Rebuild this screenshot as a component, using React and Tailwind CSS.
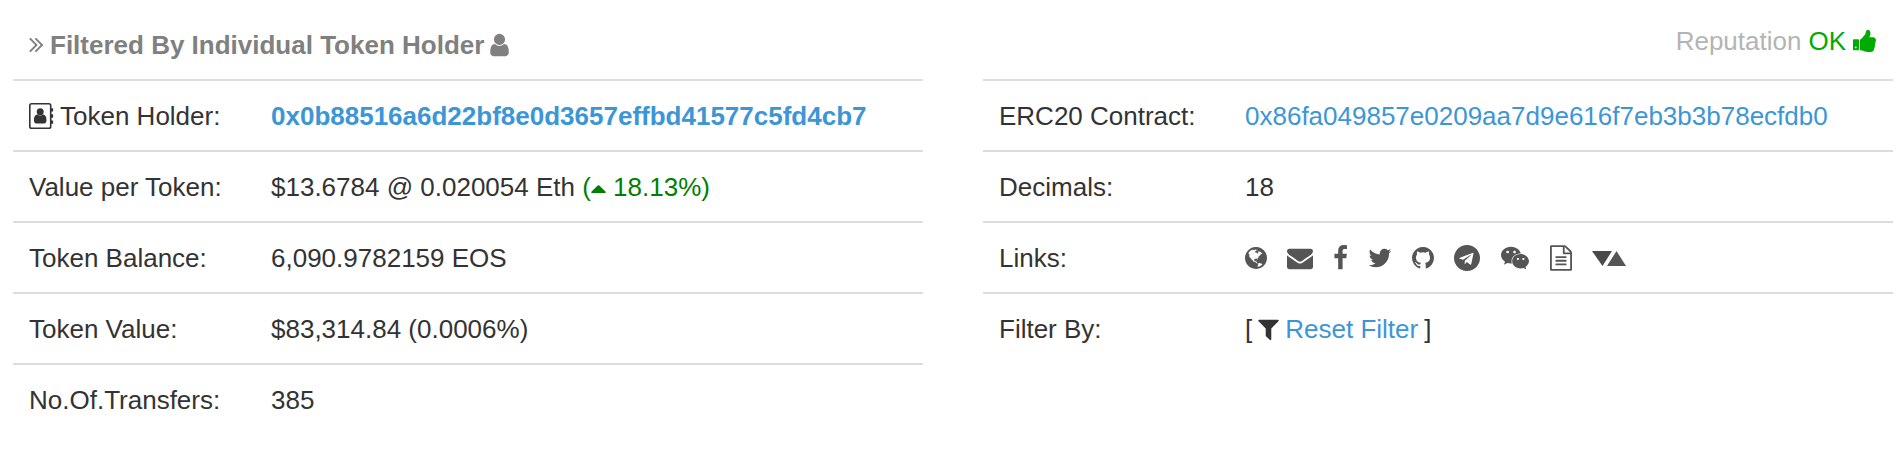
import { FaWeixin } from 'react-icons/fa';

const paths = {
  angles:
    'M979 960q0 13-10 23l-466 466q-10 10-23 10t-23-10l-50-50q-10-10-10-23t10-23l393-393-393-393q-10-10-10-23t10-23l50-50q10-10 23-10t23 10l466 466q10 10 10 23zm384 0q0 13-10 23l-466 466q-10 10-23 10t-23-10l-50-50q-10-10-10-23t10-23l393-393-393-393q-10-10-10-23t10-23l50-50q10-10 23-10t23 10l466 466q10 10 10 23z',
  user:
    'M1536 1399q0 109-62.5 187t-150.5 78h-854q-88 0-150.5-78t-62.5-187q0-85 8.5-160.5t31.5-152 58.5-131 94-89 134.5-34.5q131 128 313 128t313-128q76 0 134.5 34.5t94 89 58.5 131 31.5 152 8.5 160.5zm-256-887q0 159-112.5 271.5t-271.5 112.5-271.5-112.5-112.5-271.5 112.5-271.5 271.5-112.5 271.5 112.5 112.5 271.5z',
  thumb:
    'M320 1344q0-26-19-45t-45-19q-27 0-45.5 19t-18.5 45q0 27 18.5 45.5t45.5 18.5q26 0 45-18.5t19-45.5zm160-512v640q0 26-19 45t-45 19h-288q-26 0-45-19t-19-45v-640q0-26 19-45t45-19h288q26 0 45 19t19 45zm1184 0q0 86-55 149 15 44 15 76 3 76-43 137 17 56 0 117-15 57-54 94 9 112-49 181-64 76-197 78h-129q-66 0-144-15.5t-121.5-29-120.5-39.5q-123-43-158-44-26-1-45-19.5t-19-44.5v-641q0-25 18-43.5t43-20.5q24-2 76-59t101-121q68-87 101-120 18-18 31-48t17.5-48.5 13.5-60.5q7-39 12.5-61t19.5-52 34-50q19-19 45-19 46 0 82.5 10.5t60 26 40 40.5 24 45 12 50 5 45 .5 39q0 38-9.5 76t-19 60-27.5 56q-3 6-10 18t-11 22-8 24h277q78 0 135 57t57 135z',
  filter:
    'M1595 295q17 41-14 70l-493 493v742q0 42-39 59-13 5-25 5-27 0-45-19l-256-256q-19-19-19-45v-486l-493-493q-31-29-14-70 17-39 59-39h1280q42 0 59 39z',
  globe:
    'M896 128q209 0 385.5 103t279.5 279.5 103 385.5-103 385.5-279.5 279.5-385.5 103-385.5-103-279.5-279.5-103-385.5 103-385.5 279.5-279.5 385.5-103zm274 521q-2 1-9.5 9.5t-13.5 9.5q2 0 4.5-5t5-11 3.5-7q6-7 22-15 14-6 52-12 34-8 51 11-2-2 9.5-13t14.5-12q3-2 15-4.5t15-7.5l2-22q-12 1-17.5-7t-6.5-21q0 2-6 8 0-7-4.5-8t-11.5 1-9 1q-10-3-15-7.5t-8-16.5-4-15q-2-5-9.5-11t-9.5-10q-1-2-2.5-5.5t-3-6.5-4-5.5-5.5-2.5-7 5-7.5 10-4.5 5q-3-2-6-1.5t-4.5 1-4.5 3-5 3.5q-3 2-8.5 3t-8.5 2q15-5-1-11-10-4-16-3 9-4 7.5-12t-8.5-14h5q-1-4-8.5-8.5t-17.5-8.5-13-6q-8-5-34-9.5t-33-.5q-5 6-4.5 10.5t4 14 3.5 12.5q1 6-5.5 13t-6.5 12q0 7 14 15.5t10 21.5q-3 8-16 16t-16 12q-5 8-1.5 18.5t10.5 16.5q2 2 1.5 4t-3.5 4.5-5.5 4-6.5 3.5l-3 2q-11 5-20.5-6t-13.5-26q-7-25-16-30-23-8-29 1-5-13-41-26-25-9-58-4 6-1 0-15-7-15-19-12 3-6 4-17.5t1-13.5q3-13 12-23 1-1 7-8.5t9.5-13.5.5-6q35 4 50-11 5-5 11.5-17t10.5-17q9-6 14-5.5t14.5 5.5 14.5 5q14 1 15.5-11t-7.5-20q12 1 3-17-4-7-8-9-12-4-27 5-8 4 2 8-1-1-9.5 10.5t-16.5 17.5-16-5q-1-1-5.5-13.5t-9.5-13.5q-8 0-16 15 3-8-11-15t-24-8q19-12-8-27-7-4-20.5-5t-19.5 4q-5 7-5.5 11.5t5 8 10.5 5.5 11.5 4 8.5 3q14 10 8 14-2 1-8.5 3.5t-11.5 4.5-6 4q-3 4 0 14t-2 14q-5-5-9-17.5t-7-16.5q7 9-25 6l-10-1q-4 0-16 2t-20.5 1-13.5-8q-4-8 0-20 1-4 4-2-4-3-11-9.5t-10-8.5q-46 15-94 41 6 1 12-1 5-2 13-6.5t10-5.5q34-14 42-7l5-5q14 16 20 25-7-4-30-1-20 6-22 12 7 12 5 18-4-3-11.5-10t-14.5-11-15-5q-16 0-22 1-146 80-235 222 7 7 12 8 4 1 5 9t2.5 11 11.5-3q9 8 3 19 1-1 44 27 19 17 21 21 3 11-10 18-1-2-9-9t-9-4q-3 5 .5 18.5t10.5 12.5q-7 0-9.5 16t-2.5 35.5-1 23.5l2 1q-3 12 5.5 34.5t21.5 19.5q-13 3 20 43 6 8 8 9 3 2 12 7.5t15 10 10 10.5q4 5 10 22.5t14 23.5q-2 6 9.5 20t10.5 23q-1 0-2.5 1t-2.5 1q3 7 15.5 14t15.5 13q1 3 2 10t3 11 8 2q2-20-24-62-15-25-17-29-3-5-5.5-15.5t-4.5-14.5q2 0 6 1.5t8.500 3.500 7.500 4 2 3q-3 7 2 17.500t12 18.500 17 19 12 13q6 6 14 19.500t0 13.500q9 0 20 10.500t17 19.500q5 8 8 26t5 24q2 7 8.500 13.500t12.500 9.500l16 8 13 7q5 2 18.500 10.500t21.500 11.500q10 4 16 4t14.500-2.500 13.500-3.500q15-2 29 15t21 21q36 19 55 11-2 1 .5 7.500t8 15.500 9 14.500 5.500 8.500q5 6 18 15t18 15q6-4 7-9-3 8 7 20t18 10q14-3 14-32-31 15-49-18 0-1-2.500-5.500t-4-8.500-2.500-8.500 0-7.500 5-3q9 0 10-3.500t-2-12.500-4-13q-1-8-11-20t-12-15q-5 9-16 8t-16-9q0 1-1.500 5.500t-1.500 6.500q-13 0-15-1 1-3 2.500-17.500t3.500-22.500q1-4 5.500-12t7.500-14.500 4-12.500-4.500-9.500-17.500-2.500q-19 1-26 20-1 3-3 10.500t-5 11.500-9 7q-7 3-24 2t-24-5q-13-8-22.500-29t-9.500-37q0-10 2.500-26.500t3-25-5.500-24.500q3-2 9-9.500t10-10.500q2-1 4.500-1.500t4.500 0 4-1.500 3-6q-1-1-4-3-3-3-4-3 7 3 28.500-1.500t27.500 1.500q15 11 22-2 0-1-2.500-9.500t-.5-13.500q5 27 29 9 3 3 15.500 5t17.500 5q3 2 7 5.500t5.500 4.500 5-.5 8.500-6.500q10 14 12 24 11 40 19 44 7 3 11 2t4.500-9.500 0-14-1.500-12.500l-1-8v-18l-1-8q-15-3-18.500-12t1.500-18.500 15-18.500q1-1 8-3.500t15.500-6.500 12.500-8q21-19 15-35 7 0 11-9-1 0-5-3t-7.500-5-4.500-2q9-5 2-16 5-3 7.500-11t7.500-10q9 12 21 2 7-8 1-16 5-7 20.500-10.500t18.500-9.500q7 2 8-2t1-12 3-12q4-5 15-9t13-5l17-11q3-4 0-4 18 2 31-11 10-11-6-20 3-6-3-9.500t-15-5.500q3-1 11.500-.5t10.500-1.500q15-10-7-16-17-5-43 12zm-163 877q206-36 351-189-3-3-12.500-4.500t-12.500-3.500q-18-7-24-8 1-7-2.500-13t-8-9-12.500-8-11-7q-2-2-7-6t-7-5.500-7.500-4.500-8.500-2-10 1l-3 1q-3 1-5.500 2.500t-5.500 3-4 3 0 2.500q-21-17-36-22-5-1-11-5.500t-10.500-7-10-1.500-11.500 7q-5 5-6 15t-2 13q-7-5 0-17.500t2-18.500q-3-6-10.500-4.500t-12 4.500-11.500 8.500-9 6.500-8.500 5.500-8.500 7.500q-3 4-6 12t-5 11q-2-4-11.500-6.500t-9.500-5.500q2 10 4 35t5 38q7 31-12 48-27 25-29 40-4 22 12 26 0 7-8 20.500t-7 21.500q0 6 2 16z',
  envelope:
    'M1792 710v794q0 66-47 113t-113 47h-1472q-66 0-113-47t-47-113v-794q44 49 101 87 362 246 497 345 57 42 92.5 65.5t94.5 48 110 24.5h2q51 0 110-24.5t94.5-48 92.5-65.5q170-123 498-345 57-39 100-87zm0-294q0 79-49 151t-122 123q-376 261-468 325-10 7-42.5 31t-54 38.5-52 32.5-57.5 27-50 9h-2q-23 0-50-9t-57.5-27-52-32.5-54-38.5-42.5-31q-91-64-262-182.5t-205-142.5q-62-42-117-115.5t-55-136.5q0-78 41.5-130t118.5-52h1472q65 0 112.5 47t47.5 113z',
  facebook:
    'M1343 12v264h-157q-86 0-116 36t-30 108v189h293l-39 296h-254v759h-306v-759h-255v-296h255v-218q0-186 104-288.5t277-102.5q147 0 228 12z',
  twitter:
    'M1684 408q-67 98-162 167 1 14 1 42 0 130-38 259.5t-115.5 248.5-184.5 210.5-258 146-323 54.5q-271 0-496-145 35 4 78 4 225 0 401-138-105-2-188-64.5t-114-159.5q33 5 61 5 43 0 85-11-112-23-185.5-111.5t-73.5-205.5v-4q68 38 146 41-66-44-105-115t-39-154q0-88 44-163 121 149 294.5 238.5t371.5 99.5q-8-38-8-74 0-134 94.5-228.5t228.5-94.5q140 0 236 102 109-21 205-78-37 115-142 178 93-10 186-50z',
  github:
    'M896 128q209 0 385.5 103t279.5 279.5 103 385.5q0 251-146.5 451.5t-378.5 277.5q-27 5-40-7t-13-30q0-3 .5-76.5t.5-134.5q0-97-52-142 57-6 102.5-18t94-39 81-66.5 53-105 20.5-150.5q0-119-79-206 37-91-8-204-28-9-81 11t-92 44l-38 24q-93-26-192-26t-192 26q-16-11-42.5-27t-83.5-38.5-85-13.5q-45 113-8 204-79 87-79 206 0 85 20.5 150t52.5 105 80.5 67 94 39 102.5 18q-39 36-49 103-21 10-45 15t-57 5-65.5-21.5-55.5-62.5q-19-32-48.5-52t-49.5-24l-20-3q-21 0-29 4.5t-5 11.5 9 14 13 12l7 5q22 10 43.5 38t31.5 51l10 23q13 38 44 61.5t67 30 69.5 7 55.5-3.5l23-4q0 38 .5 88.5t.5 54.5q0 18-13 30t-40 7q-232-77-378.5-277.5t-146.5-451.5q0-209 103-385.5t279.5-279.5 385.5-103z',
  telegram:
    'M1189 1307l147-693q9-44-10.5-63t-51.5-7l-864 333q-29 11-39.5 25t-2.5 26.5 32 19.5l221 69 513-323q21-14 32-6 7 5-4 15l-415 375v0 0l-16 228q23 0 45-22l108-104 224 165q64 36 81-38zm603-411q0 182-71 348t-191 286-286 191-348 71-348-71-286-191-191-286-71-348 71-348 191-286 286-191 348-71 348 71 286 191 191 286 71 348z',
  file:
    'M1596 380q28 28 48 76t20 88v1152q0 40-28 68t-68 28h-1344q-40 0-68-28t-28-68v-1600q0-40 28-68t68-28h896q40 0 88 20t76 48zm-444-244v376h376q-10-29-22-41l-313-313q-12-12-41-22zm384 1528v-1024h-416q-40 0-68-28t-28-68v-416h-768v1536h1280zm-1024-864q0-14 9-23t23-9h704q14 0 23 9t9 23v64q0 14-9 23t-23 9h-704q-14 0-23-9t-9-23v-64zm736 224q14 0 23 9t9 23v64q0 14-9 23t-23 9h-704q-14 0-23-9t-9-23v-64q0-14 9-23t23-9h704zm0 256q14 0 23 9t9 23v64q0 14-9 23t-23 9h-704q-14 0-23-9t-9-23v-64q0-14 9-23t23-9h704z',
};

const Icon = ({ name, box, className }) => (
  <svg viewBox={box} fill="currentColor" className={`h-[26px] shrink-0 ${className}`} aria-hidden="true">
    <path d={paths[name]} />
  </svg>
);

const AddressBookIcon = () => (
  <svg viewBox="0 0 25 26" className="h-[26px] w-[25px] shrink-0" aria-hidden="true">
    <rect x="0.8" y="0.8" width="20.9" height="24.4" rx="1.8" fill="none" stroke="currentColor" strokeWidth="1.6" />
    <path fill="currentColor" d="M22 5.2h2.1v3.4H22zM22 11.3h2.1v3.4H22zM22 17.4h2.1v3.4H22z" />
    <circle cx="11.2" cy="8.8" r="3.5" fill="currentColor" />
    <path
      fill="currentColor"
      d="M8.3 11.4c-2.3.2-3.4 2.3-3.4 5.6 0 2.2.9 3.4 2.3 3.4h8c1.4 0 2.3-1.2 2.3-3.4 0-3.3-1.1-5.4-3.4-5.600-1.600 1.500-4.200 1.500-5.800 0z"
    />
  </svg>
);

const CaretUpIcon = () => (
  <svg viewBox="0 0 15 8" fill="currentColor" className="inline-block h-2 w-[15px]" aria-hidden="true">
    <path d="M.6 8Q-.2 7.4.6 6.600L6.700.5q.8-.7 1.600 0l6.100 6.100q.8.8 0 1.400z" />
  </svg>
);

const TrianglesIcon = () => (
  <svg viewBox="0 0 34 26" className="h-[26px] w-[34px]" aria-hidden="true">
    <path d="M0 6h20l-9.500 15z" fill="#4a4a4a" />
    <path d="M24.500 6L34 21H15z" fill="#555" />
  </svg>
);

const socialLinks = [
  { label: 'Website', icon: <Icon name="globe" box="128 0 1536 1792" className="w-[22px]" /> },
  { label: 'Email', icon: <Icon name="envelope" box="0 0 1792 1792" className="w-[26px]" /> },
  { label: 'Facebook', icon: <Icon name="facebook" box="384 0 1024 1792" className="w-[15px]" /> },
  { label: 'Twitter', icon: <Icon name="twitter" box="64 0 1664 1792" className="w-[24px]" /> },
  { label: 'Github', icon: <Icon name="github" box="128 0 1536 1792" className="w-[22px]" /> },
  { label: 'Telegram', icon: <Icon name="telegram" box="0 0 1792 1792" className="w-[26px]" /> },
  { label: 'WeChat', icon: <FaWeixin className="h-[26px] w-[30px]" /> },
  { label: 'Whitepaper', icon: <Icon name="file" box="128 0 1536 1792" className="w-[22px]" /> },
  { label: 'Market data', icon: <TrianglesIcon /> },
];

const holderRows = [
  {
    label: (
      <span className="flex items-center gap-[6px]">
        <AddressBookIcon />
        Token Holder:
      </span>
    ),
    value: (
      <a href="#holder" className="font-bold text-[#3c96d6]">
        0x0b88516a6d22bf8e0d3657effbd41577c5fd4cb7
      </a>
    ),
  },
  {
    label: 'Value per Token:',
    value: (
      <>
        $13.6784 @ 0.020054 Eth{' '}
        <span className="text-[#008000]">
          (<CaretUpIcon /> 18.13%)
        </span>
      </>
    ),
  },
  { label: 'Token Balance:', value: '6,090.9782159 EOS' },
  { label: 'Token Value:', value: '$83,314.84 (0.0006%)' },
  { label: 'No.Of.Transfers:', value: '385' },
];

const contractRows = [
  {
    label: 'ERC20 Contract:',
    value: (
      <a href="#contract" className="text-[#3c96d6]">
        0x86fa049857e0209aa7d9e616f7eb3b3b78ecfdb0
      </a>
    ),
  },
  { label: 'Decimals:', value: '18' },
  {
    label: 'Links:',
    value: (
      <div className="flex items-center gap-5 text-[#555]">
        {socialLinks.map((link) => (
          <a key={link.label} href="#links" aria-label={link.label}>
            {link.icon}
          </a>
        ))}
      </div>
    ),
  },
  {
    label: 'Filter By:',
    value: (
      <div className="flex items-center gap-[6px]">
        [
        <Icon name="filter" box="192 0 1408 1792" className="w-[21px]" />
        <a href="#reset" className="text-[#3c96d6]">Reset Filter</a>
        ]
      </div>
    ),
  },
];

const InfoTable = ({ rows, labelWidth }) => (
  <table className="w-full table-fixed border-collapse text-left">
    <tbody>
      {rows.map((row, i) => (
        <tr key={i} className="h-[71px] border-t-2 border-[#ddd]">
          <th scope="row" className={`${labelWidth} pl-4 font-normal whitespace-nowrap`}>{row.label}</th>
          <td className="pl-4 whitespace-nowrap">{row.value}</td>
        </tr>
      ))}
    </tbody>
  </table>
);

const App = () => {
  return (
    <main className="grid grid-cols-2 gap-[60px] bg-white pr-[7px] pb-7 pl-[13px] font-['Liberation_Sans',Arial,sans-serif] text-[26px] leading-8 text-[#333]">
      <section>
        <h2 className="flex h-[79px] items-center gap-[6px] pt-[10px] pl-4 font-bold text-[#808080]">
          <Icon name="angles" box="384 64 1024 1792" className="w-[15px]" />
          Filtered By Individual Token Holder
          <Icon name="user" box="256 0 1280 1792" className="w-[19px]" />
        </h2>
        <InfoTable rows={holderRows} labelWidth="w-[242px]" />
      </section>
      <section>
        <div className="flex h-[79px] items-center justify-end gap-[7px] pt-[2px] pr-[17px]">
          <span className="text-[#b4b4b4]">Reputation</span>
          <span className="text-[#00ab00]">OK</span>
          <Icon name="thumb" box="64 0 1600 1792" className="w-[23px] text-[#00ab00]" />
        </div>
        <InfoTable rows={contractRows} labelWidth="w-[246px]" />
      </section>
    </main>
  );
};

export default App;
